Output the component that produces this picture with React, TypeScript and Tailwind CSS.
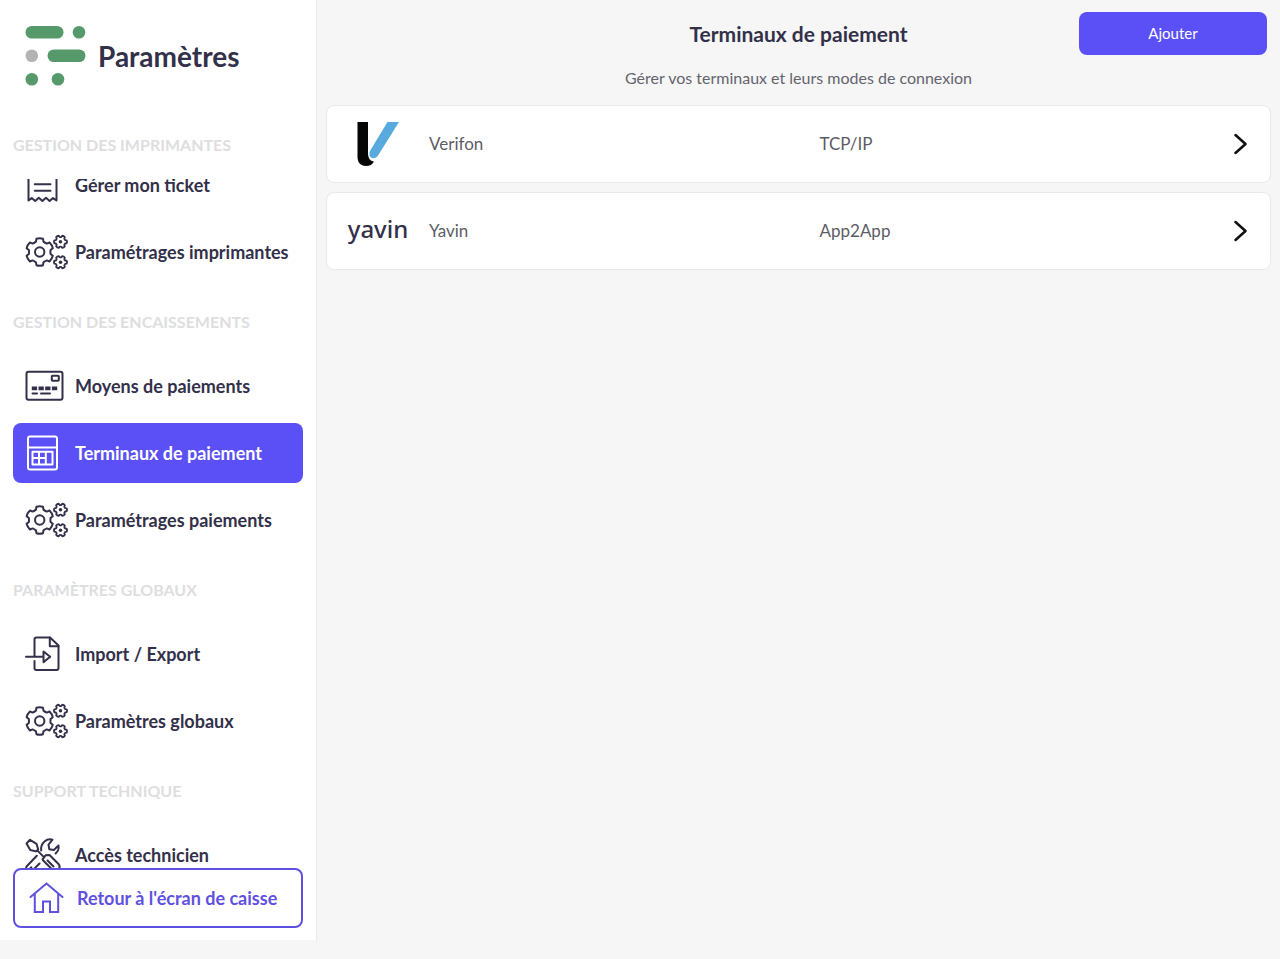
import type { ReactNode } from "react";

function gearPath(cx: number, cy: number, outer: number, inner: number, offset: number) {
  const point = (radius: number, degrees: number) => {
    const a = ((degrees + offset) * Math.PI) / 180;
    return `${(cx + radius * Math.cos(a)).toFixed(2)} ${(cy + radius * Math.sin(a)).toFixed(2)}`;
  };
  let d = "";
  for (let i = 0; i < 6; i++) {
    const t = i * 60;
    d += `${i === 0 ? "M" : "L"}${point(inner, t - 20)}`;
    d += `L${point(outer, t - 14)}Q${point(outer + 0.6, t)} ${point(outer, t + 14)}`;
    d += `L${point(inner, t + 20)}Q${point(inner - 0.4, t + 30)} ${point(inner, t + 40)}`;
  }
  return d + "Z";
}

const BIG_GEAR = gearPath(14.7, 20, 13.6, 11, 30);
const TOP_GEAR = gearPath(35.5, 9.8, 6.3, 5, 0);
const LOW_GEAR = gearPath(35.5, 30.2, 6.3, 5, 0);

function Icon({ width, children }: { width: number; children: ReactNode }) {
  return (
    <svg
      width={width}
      height="40"
      viewBox={`0 0 ${width} 40`}
      fill="none"
      stroke="currentColor"
      strokeWidth="2"
      strokeLinecap="round"
      strokeLinejoin="round"
      aria-hidden="true"
      className="shrink-0"
    >
      {children}
    </svg>
  );
}

const GearsIcon = () => (
  <Icon width={43}>
    <path d={BIG_GEAR} />
    <circle cx="14.7" cy="20" r="4.7" />
    <g strokeWidth="1.8">
      <path d={TOP_GEAR} />
      <path d={LOW_GEAR} />
    </g>
    <circle cx="35.5" cy="9.8" r="1.8" fill="currentColor" stroke="none" />
    <circle cx="35.5" cy="30.2" r="1.8" fill="currentColor" stroke="none" />
  </Icon>
);

const TicketIcon = () => (
  <Icon width={43}>
    <path d="M3.500 5V35.500l3.200-2.400 3.500 2.900 3.600-3.200 3.600 3.200 3.600-3.200 3.600 3.200 3.400-2.900 3.500 2.400V5Z" />
    <path d="M9.800 19.300h15.700M9.800 25.700h15.700" />
  </Icon>
);

const CardIcon = () => (
  <Icon width={43}>
    <rect x="1.500" y="5.800" width="36" height="28" rx="2" />
    <rect x="26.800" y="9.800" width="7" height="5" rx="0.800" />
    <path d="M6.800 22.300h25.500" strokeWidth="3.800" strokeLinecap="butt" strokeDasharray="5.300 1.400" />
    <path d="M7.500 27.500h4.500M16 27.500h9" />
  </Icon>
);

const TerminalIcon = () => (
  <Icon width={43}>
    <rect x="3" y="3.500" width="29" height="33" rx="2" />
    <path d="M3 14.500h29" />
    <path d="M7.500 18.800h20v12.700h-20ZM14 18.800v12.700M20.800 18.800v12.700M7.500 25h13.300" />
  </Icon>
);

const ImportIcon = () => (
  <Icon width={43}>
    <path d="M9.500 22V5.500a2 2 0 0 1 2-2H25l8.500 8V34a2 2 0 0 1-2 2h-20a2 2 0 0 1-2-2v-7" />
    <path d="M24.800 3.500v8.800h8.700M1 22.800h17.500M18.500 22.800v-5.300l6.700 5.300-6.700 5.300Z" />
  </Icon>
);

const ToolsIcon = () => (
  <Icon width={43}>
    <path d="M1.500 8.500 5 4.800l6.500 4 1.700 5.400-2.200 2.200-5.700-1.400ZM12.200 15.400l7 7" />
    <path d="m17.500 24.300 3-4 4-.3 9 9a4.200 4.200 0 0 1-5.800 6l-9.500-9.500Z" />
    <path d="M16.200 15.500A10 10 0 0 1 19.500 6.500c2.300-2 5-2.600 8-1.800l-4 5 .8 4.500 4.500.8 4.700-4.500c.5 3-.6 6-2.900 8" />
    <path d="M11.800 20.800 2 31a3.500 3.500 0 0 0 5 5l7.500-7.500" />
    <path d="m5.500 33 .8-.8M22.500 25.500l6 6" />
  </Icon>
);

const HomeIcon = () => (
  <Icon width={36}>
    <path d="M1.500 19 17.500 5.500 33.500 19M5.800 15.800V34h8.200V23.500h7V34h8.200V15.800" strokeLinejoin="miter" />
  </Icon>
);

const Logo = () => (
  <svg width="61" height="60" viewBox="0 0 61 60" fill="#569a6c" aria-hidden="true" className="shrink-0">
    <rect x="0.500" width="38" height="12.600" rx="6.300" />
    <circle cx="54" cy="6.300" r="6.300" />
    <circle cx="6.800" cy="29.700" r="6.300" fill="#b3b3b5" />
    <rect x="22.500" y="23.400" width="38" height="12.600" rx="6.300" />
    <circle cx="6.800" cy="53.300" r="6.300" />
    <circle cx="33" cy="53.300" r="6.300" />
  </svg>
);

const VerifoneLogo = () => (
  <svg width="42" height="44" viewBox="0 0 42 44" aria-hidden="true">
    <path d="M0.500 0H11v31c0 5 2 8 6 8.500-1.500 3-4.500 4.500-8 4.500-5.500 0-8.500-3.500-8.500-9.500Z" fill="#050505" />
    <path d="M30.500 0H42L21 33.500c-1.700 2.700-4.800 3.600-7 2-2-1.500-2-5-.3-7.800Z" fill="#58a9de" />
  </svg>
);

type Entry = { label: string; icon: ReactNode; active?: boolean };

const firstEntries: Entry[] = [
  { label: "Gérer mon ticket", icon: <TicketIcon /> },
  { label: "Paramétrages imprimantes", icon: <GearsIcon /> },
];

const groups: { title: string; entries: Entry[] }[] = [
  {
    title: "GESTION DES ENCAISSEMENTS",
    entries: [
      { label: "Moyens de paiements", icon: <CardIcon /> },
      { label: "Terminaux de paiement", icon: <TerminalIcon />, active: true },
      { label: "Paramétrages paiements", icon: <GearsIcon /> },
    ],
  },
  {
    title: "PARAMÈTRES GLOBAUX",
    entries: [
      { label: "Import / Export", icon: <ImportIcon /> },
      { label: "Paramètres globaux", icon: <GearsIcon /> },
    ],
  },
  {
    title: "SUPPORT TECHNIQUE",
    entries: [{ label: "Accès technicien", icon: <ToolsIcon /> }],
  },
];

const terminals = [
  { name: "Verifon", mode: "TCP/IP", logo: <VerifoneLogo /> },
  {
    name: "Yavin",
    mode: "App2App",
    logo: (
      <span className="pb-1 font-['Noto_Sans',sans-serif] text-2xl leading-7 font-medium text-[#33304a]">yavin</span>
    ),
  },
];

function GroupTitle({ children }: { children: ReactNode }) {
  return (
    <h2 className="flex h-[67px] shrink-0 items-center pb-0.5 text-base font-bold text-[#dedee0]">{children}</h2>
  );
}

function NavEntry({ label, icon, active }: Entry) {
  return (
    <li className="shrink-0 pb-[7px]">
      <a
        href="#"
        aria-current={active ? "page" : undefined}
        className={
          active
            ? "flex h-[60px] items-center gap-[7px] rounded-lg bg-[#5a50f5] pl-3 text-white"
            : "flex h-[60px] items-center gap-[7px] rounded-lg pl-3"
        }
      >
        {icon}
        <span className="text-lg leading-6 font-bold whitespace-nowrap">{label}</span>
      </a>
    </li>
  );
}

export default function App() {
  return (
    <div className="flex h-screen bg-[#f6f6f6] font-[Lato,sans-serif] text-[#33304a]">
      <aside className="mb-[19px] flex w-[317px] shrink-0 flex-col border-r border-[#e9e9ea] bg-white px-[13px] pb-3">
        <div className="flex h-28 shrink-0 items-center gap-3 pl-3">
          <Logo />
          <span className="text-[28px] leading-8 font-bold">Paramètres</span>
        </div>
        <nav className="flex min-h-0 flex-1 flex-col overflow-hidden" aria-label="Paramètres">
          <GroupTitle>GESTION DES IMPRIMANTES</GroupTitle>
          <ul className="flex h-[110px] shrink-0 flex-col justify-end overflow-hidden">
            {firstEntries.map((entry) => (
              <NavEntry key={entry.label} {...entry} />
            ))}
          </ul>
          {groups.map((group) => (
            <section key={group.title} className="shrink-0">
              <GroupTitle>{group.title}</GroupTitle>
              <ul>
                {group.entries.map((entry) => (
                  <NavEntry key={entry.label} {...entry} />
                ))}
              </ul>
            </section>
          ))}
        </nav>
        <button
          type="button"
          className="flex h-[60px] w-full shrink-0 items-center gap-3 rounded-lg border-2 border-[#5f51e0] bg-white pl-[14px] text-[#5f51e0]"
        >
          <HomeIcon />
          <span className="text-lg leading-6 font-bold whitespace-nowrap">Retour à l'écran de caisse</span>
        </button>
      </aside>

      <main className="flex min-w-0 flex-1 flex-col">
        <header className="grid grid-cols-[1fr_auto_1fr] items-center px-[13px] pt-3">
          <h1 className="col-start-2 text-[21px] leading-7 font-bold">Terminaux de paiement</h1>
          <button
            type="button"
            className="h-[43px] w-[188px] justify-self-end rounded-lg bg-[#5a50f5] text-[15px] text-white"
          >
            Ajouter
          </button>
        </header>
        <p className="mt-[11px] text-center text-base leading-6 text-[#65646e]">
          Gérer vos terminaux et leurs modes de connexion
        </p>
        <ul className="mt-[15px] flex flex-col gap-[9px] px-[9px]">
          {terminals.map((terminal) => (
            <li key={terminal.name}>
              <a
                href="#"
                className="flex h-[78px] items-center rounded-lg border border-[#e9e9ea] bg-white text-[17px] leading-6 text-[#5d5c66]"
              >
                <span className="flex w-[102px] shrink-0 justify-center">{terminal.logo}</span>
                <span className="flex-1">{terminal.name}</span>
                <span className="flex-1">{terminal.mode}</span>
                <span className="flex w-[60px] shrink-0 justify-center">
                  <svg
                    width="14"
                    height="22"
                    viewBox="0 0 14 22"
                    fill="none"
                    stroke="#111114"
                    strokeWidth="2.500"
                    strokeLinecap="round"
                    strokeLinejoin="round"
                    aria-hidden="true"
                  >
                    <path d="m2.500 2 10 9-10 9" />
                  </svg>
                </span>
              </a>
            </li>
          ))}
        </ul>
      </main>
    </div>
  );
}
